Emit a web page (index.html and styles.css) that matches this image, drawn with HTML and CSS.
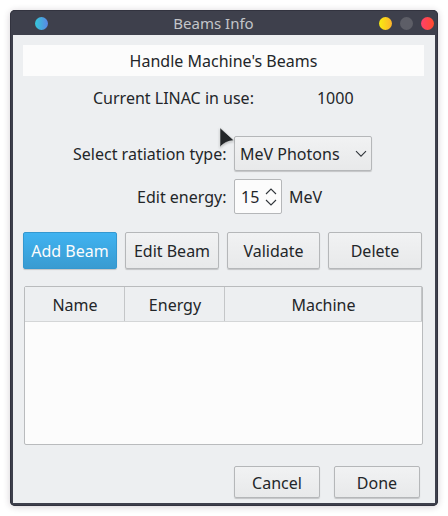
FILE: index.html
```html
<!DOCTYPE html>
<html lang="en">
<head>
<meta charset="utf-8">
<title>Beams Info</title>
<link rel="stylesheet" href="styles.css">
</head>
<body>
<main class="window">
  <header class="titlebar">
    <span class="dot dot-menu"></span>
    <h1 class="title">Beams Info</h1>
    <div class="controls">
      <span class="dot dot-min"></span>
      <span class="dot dot-max"></span>
      <span class="dot dot-close"></span>
    </div>
  </header>
  <section class="content">
    <h2 class="heading">Handle Machine's Beams</h2>
    <div class="linac"><span>Current LINAC in use:</span><span class="linac-value">1000</span></div>
    <div class="form">
      <span class="label">Select ratiation type:</span>
      <div class="combo">
        <span>MeV Photons</span>
        <svg width="12" height="8" viewBox="0 0 12 8"><path d="M1 1.2 6 6.2 11 1.2"/></svg>
      </div>
      <span class="label">Edit energy:</span>
      <div class="energy">
        <div class="spin">
          <span>15</span>
          <svg width="12" height="20" viewBox="0 0 12 20"><path d="M1 7 6 2 11 7M1 13 6 18 11 13"/></svg>
        </div>
        <span>MeV</span>
      </div>
    </div>
    <div class="actions">
      <button class="btn primary">Add Beam</button>
      <button class="btn">Edit Beam</button>
      <button class="btn">Validate</button>
      <button class="btn">Delete</button>
    </div>
    <div class="table">
      <div class="table-head"><span>Name</span><span>Energy</span><span>Machine</span></div>
    </div>
    <div class="footer">
      <button class="btn">Cancel</button>
      <button class="btn">Done</button>
    </div>
  </section>
  <svg class="cursor" width="18" height="25" viewBox="0 0 18 25"><path d="M1 .7V20.3Q5.8 14 15 13.5Z"/></svg>
</main>
</body>
</html>
```
FILE: styles.css
```css
* { box-sizing: border-box; }
body {
  margin: 0;
  padding: 10px;
  background: #fff;
  color: #232629;
  font: 16px/22px "Noto Sans", sans-serif;
  white-space: nowrap;
}
h1, h2 { margin: 0; font-weight: 400; }
svg { display: block; flex: none; fill: none; stroke: #31363b; stroke-width: 1.1; }
.window {
  position: relative;
  width: 428px;
  height: 496px;
  display: flex;
  flex-direction: column;
  padding: 0 3px 3px;
  border-radius: 5px;
  background: #3e404c;
  box-shadow: inset 0 0 0 1px #32333f, 0 1px 7px rgba(40, 20, 40, .2);
}
.titlebar {
  height: 25px;
  display: grid;
  grid-template-columns: 60px 1fr 60px;
  align-items: center;
  padding: 2px 0 0 22px;
}
.title {
  margin-top: -1px;
  padding-right: 43px;
  font-size: 15px;
  line-height: 22px;
  text-align: center;
  color: #c3c5c9;
}
.controls { display: flex; gap: 8px; justify-content: flex-end; padding-right: 1px; }
.dot { width: 13px; height: 13px; border-radius: 50%; }
.dot-menu { background: linear-gradient(90deg, #34c8d8, #5b86e5); }
.dot-min { background: linear-gradient(90deg, #f8ec10, #fdb32b); }
.dot-max { background: #5d5e67; }
.dot-close { background: linear-gradient(90deg, #ff416c, #ff4b2b); }
.content { flex: 1; padding: 10px 11px 5px 10px; background: #edeff1; }
.heading {
  height: 31px;
  padding-top: 1px;
  font-size: 16px;
  line-height: 31px;
  text-align: center;
  background: #fcfcfc;
}
.linac { display: flex; gap: 63px; margin: 11px 0 0 70px; }
.form {
  display: grid;
  grid-template-columns: 203px auto;
  grid-template-rows: 35px 35px;
  gap: 8px;
  align-items: center;
  margin-top: 27px;
}
.label { margin-right: -0.5px; text-align: right; }
.combo, .spin {
  display: flex;
  align-items: center;
  justify-content: space-between;
  height: 35px;
  border: 1px solid #b5b7b9;
  border-radius: 2px;
}
.combo {
  width: 138px;
  padding: 0 4px 0 5px;
  background: linear-gradient(#f1f2f3, #e8e9ea);
  box-shadow: 0 1px 1px rgba(0, 0, 0, .18);
}
.spin { width: 48px; padding: 0 4px 0 6px; background: #fcfcfc; }
.energy { display: flex; align-items: center; gap: 7px; }
.actions { display: grid; grid-template-columns: 94px 94px 93px 94px; gap: 8px; margin-top: 18px; }
.btn {
  height: 37px;
  padding: 0;
  border: 1px solid #b5b7b9;
  border-radius: 2px;
  background: linear-gradient(#f1f2f3, #e8e9ea);
  box-shadow: 0 1px 1px rgba(0, 0, 0, .18);
  color: inherit;
  font: inherit;
}
.primary { border-color: #3498d0; background: linear-gradient(#40b3f1, #399bd1); color: #fcfcfc; }
.table {
  width: 399px;
  height: 159px;
  margin: 17px 0 0 1px;
  border: 1px solid #b9bbbd;
  border-radius: 2px;
  background: #fcfcfc;
}
.table-head {
  display: grid;
  grid-template-columns: 100px 100px 1fr;
  height: 35px;
  line-height: 36px;
  text-align: center;
  background: #edeff1;
  border-bottom: 1px solid #d4d6d7;
}
.table-head span { height: 34px; padding-left: 1px; border-right: 1px solid #c4c6c8; }
.footer { display: grid; grid-template-columns: 86px 86px; gap: 14px; margin: 21px 0 0 211px; }
.footer .btn { height: 32px; padding-top: 2px; }
.cursor {
  position: absolute;
  left: 209px;
  top: 117px;
  fill: #232629;
  stroke: #f7f8f8;
  stroke-width: .5;
  filter: drop-shadow(0 1px 1px rgba(0, 0, 0, .25));
}
```
